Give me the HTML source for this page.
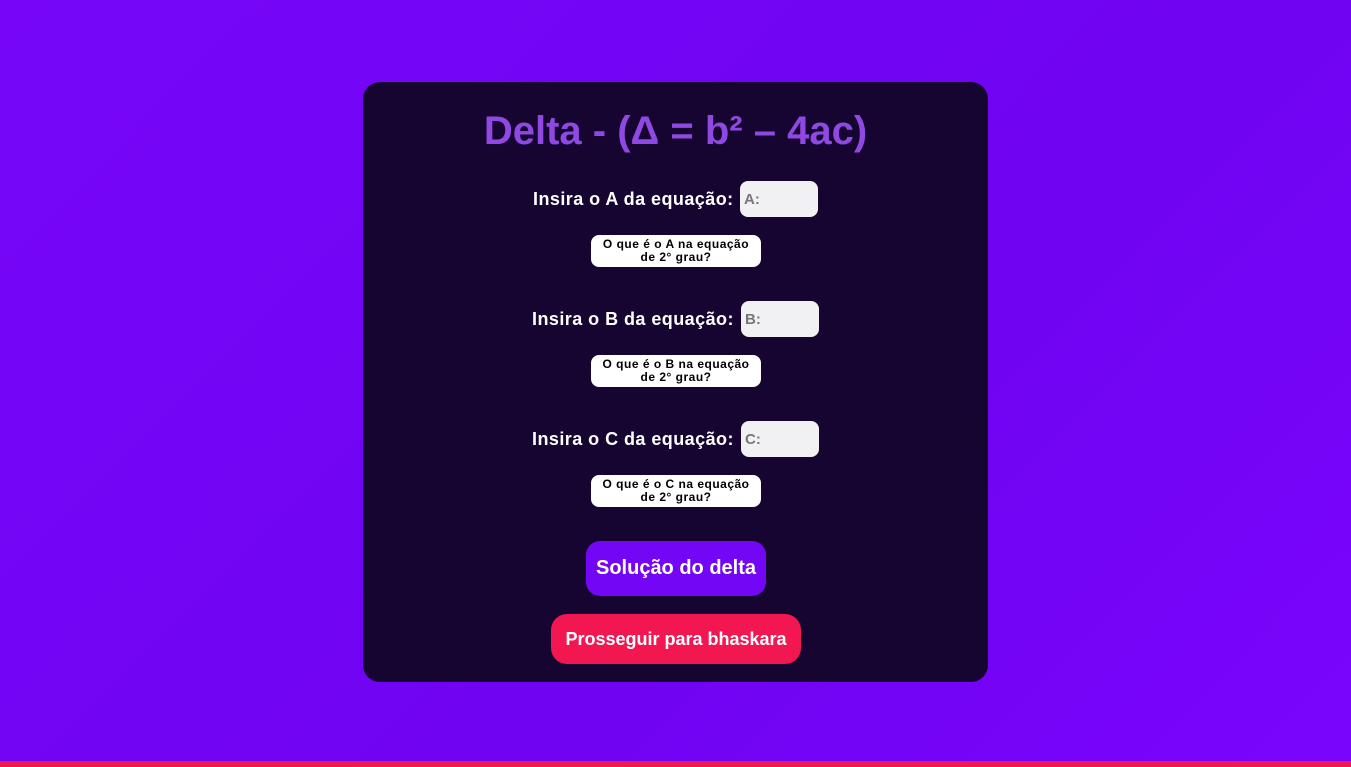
<!DOCTYPE html>
<html><head><meta charset="utf-8"><style>
*{margin:0;padding:0;box-sizing:border-box}
body{width:1351px;height:767px;overflow:hidden;background:linear-gradient(135deg,#7706f8,#7003f2 60%,#7a05fb);font-family:"Liberation Sans",Arial,sans-serif;position:relative}
.bar{position:absolute;left:0;top:761px;width:1351px;height:6px;background:#f31650}
.card{position:absolute;left:363px;top:82px;width:625px;height:600px;background:#150530;border-radius:17px}
.abs{position:absolute}
h1{position:absolute;left:0;width:625px;top:26px;text-align:center;font-size:40px;font-weight:bold;color:#8f49e2;line-height:46px}
.lbl{color:#fff;font-weight:bold;font-size:18px;line-height:20px;letter-spacing:0.45px}
.inp{width:78px;height:36px;background:#f1f0f3;border-radius:8px;color:#777;font-weight:bold;font-size:15px;padding:10px 0 0 4px}
.q{width:170px;height:32px;background:#fff;border-radius:8px;color:#000;font-weight:bold;font-size:12px;line-height:13px;text-align:center;padding-top:3px;letter-spacing:0.5px}
.b1{left:223px;top:459px;width:180px;height:55px;background:#7306f5;border-radius:14px;color:#fff;font-weight:bold;font-size:20px;text-align:center;line-height:55px}
.b2{left:188px;top:532px;width:250px;height:50px;background:#f21751;border-radius:16px;color:#fff;font-weight:bold;font-size:18px;text-align:center;line-height:50px}
</style></head><body>
<div class="card">
<h1>Delta - (Δ = b² – 4ac)</h1>
<div class="abs lbl" style="left:170px;top:107px">Insira o A da equação:</div>
<div class="abs inp" style="left:377px;top:99px">A:</div>
<div class="abs q" style="left:228px;top:153px">O que é o A na equação<br>de 2° grau?</div>
<div class="abs lbl" style="left:169px;top:227px">Insira o B da equação:</div>
<div class="abs inp" style="left:378px;top:219px">B:</div>
<div class="abs q" style="left:228px;top:273px">O que é o B na equação<br>de 2° grau?</div>
<div class="abs lbl" style="left:169px;top:347px">Insira o C da equação:</div>
<div class="abs inp" style="left:378px;top:339px">C:</div>
<div class="abs q" style="left:228px;top:393px">O que é o C na equação<br>de 2° grau?</div>
<div class="abs b1">Solução do delta</div>
<div class="abs b2">Prosseguir para bhaskara</div>
</div>
<div class="bar"></div>
</body></html>
